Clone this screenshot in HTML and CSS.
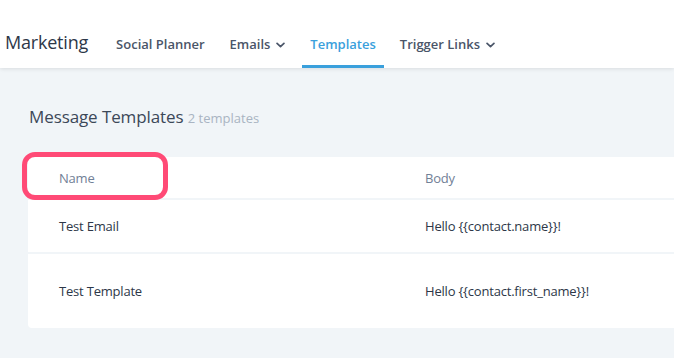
FILE: index.html
```html
<!DOCTYPE html>
<html>
<head>
<meta charset="utf-8">
<link rel="stylesheet" href="styles.css">
</head>
<body>
<header class="topbar">
  <div class="brand">Marketing</div>
  <nav class="nav">
    <a class="nav-item">Social Planner</a>
    <a class="nav-item">Emails <svg class="chev" viewBox="0 0 10 6" width="9" height="6"><path d="M1.2 1.2 L5 4.8 L8.8 1.2" fill="none" stroke="currentColor" stroke-width="1.9" stroke-linecap="round" stroke-linejoin="round"/></svg></a>
    <a class="nav-item active">Templates</a>
    <a class="nav-item">Trigger Links <svg class="chev" viewBox="0 0 10 6" width="9" height="6"><path d="M1.2 1.2 L5 4.8 L8.8 1.2" fill="none" stroke="currentColor" stroke-width="1.9" stroke-linecap="round" stroke-linejoin="round"/></svg></a>
  </nav>
</header>
<main class="content">
  <h1 class="title">Message Templates <span class="count">2 templates</span></h1>
  <div class="card">
    <div class="row head">
      <div class="cell name">Name</div>
      <div class="cell body">Body</div>
    </div>
    <div class="row r1">
      <div class="cell name">Test Email</div>
      <div class="cell body">Hello {{contact.name}}!</div>
    </div>
    <div class="row r2">
      <div class="cell name">Test Template</div>
      <div class="cell body">Hello {{contact.first_name}}!</div>
    </div>
    <div class="highlight"></div>
  </div>
</main>
</body>
</html>
```
FILE: styles.css
```css
* { box-sizing: border-box; }
html, body { margin: 0; padding: 0; }
body {
  background: #f1f5f8;
  font-family: "Open Sans", "Noto Sans", sans-serif;
  color: #3c4858;
  width: 674px;
  height: 358px;
  overflow: hidden;
}
.topbar {
  height: 68px;
  background: #fff;
  display: flex;
  align-items: flex-end;
  box-shadow: 0 1px 4px rgba(0,0,0,0.10);
  position: relative;
  z-index: 1;
}
.brand {
  font-size: 18px;
  color: #2d3748;
  padding-left: 5px;
  padding-bottom: 14px;
  letter-spacing: -0.2px;
}
.nav {
  display: flex;
  margin-left: 28px;
  height: 68px;
  align-items: stretch;
}
.nav-item {
  font-size: 13px;
  font-weight: 600;
  color: #4a5568;
  display: flex;
  align-items: center;
  padding-top: 23px;
  margin-right: 25px;
  letter-spacing: 0;
  border-bottom: 3px solid transparent;
  white-space: nowrap;
}
.nav-item .chev { margin-left: 6px; margin-top: 1px; color: #4a5568; }
.nav-item.active {
  color: #3aa0dc;
  border-bottom-color: #3aa0dc;
  padding-left: 8px;
  padding-right: 8px;
  margin-left: -8px;
  margin-right: 16px;
}
.content {
  padding: 38px 0 0 28px;
}
.title {
  margin: 0 0 28px 1px;
  font-size: 17px;
  font-weight: 400;
  color: #3c4858;
  letter-spacing: -0.1px;
  line-height: 22px;
}
.count {
  font-size: 13px;
  color: #a9b4c2;
  letter-spacing: 0;
}
.card {
  background: #fff;
  border-radius: 4px 0 0 4px;
  position: relative;
  width: 660px;
}
.row {
  display: flex;
  align-items: center;
  font-size: 13px;
  color: #2d3748;
  letter-spacing: -0.2px;
}
.row + .row { border-top: 2px solid #f1f5f8; }
.row.head { height: 41px; color: #718096; }
.row.r1 { height: 54px; }
.row.r2 { height: 76px; }
.cell.name { width: 397px; padding-left: 31px; }
.cell.body { flex: 1; }
.highlight {
  position: absolute;
  left: -6px;
  top: -5px;
  width: 146px;
  height: 48px;
  border: 5px solid #ff4a76;
  border-radius: 13px;
}
```
